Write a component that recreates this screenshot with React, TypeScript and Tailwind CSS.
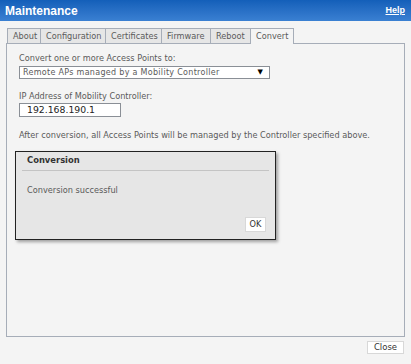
import React from 'react';

const tabs = [
  { name: 'About', w: 'w-[33px]' },
  { name: 'Configuration', w: 'w-[65px]' },
  { name: 'Certificates', w: 'w-[56px]' },
  { name: 'Firmware', w: 'w-[49px]' },
  { name: 'Reboot', w: 'w-[40px]' },
  { name: 'Convert', w: 'w-[44px]' },
];

export default function App() {
  const active = 'Convert';

  return (
    <div className="w-[411px] h-[364px] bg-[#f4f4f4] flex flex-col font-['DejaVu_Sans',Verdana,sans-serif] text-[#5a5a5a] overflow-hidden">
      {/* Header */}
      <div className="h-[21px] flex items-center justify-between pl-[5px] pr-[6px] bg-gradient-to-b from-[#135fb9] to-[#3a80d2]">
        <span className="text-white font-bold text-[12px] leading-none font-['Liberation_Sans',Arial,sans-serif]">Maintenance</span>
        <a href="#" className="text-white font-bold text-[9px] underline leading-none font-['Liberation_Sans',Arial,sans-serif]">Help</a>
      </div>

      {/* Tabs */}
      <div className="flex pl-[7px] mt-[7px] h-[16px] relative z-10">
        {tabs.map((t) => (
          <div
            key={t.name}
            className={`${t.w} h-[16px] pl-[5px] text-[8.2px] leading-[15px] border-t border-l border-[#a6adb8] ${
              t.name === active ? 'bg-[#f4f4f4] border-r' : 'bg-[#e6e6e6] border-b'
            }`}
          >
            {t.name}
          </div>
        ))}
      </div>

      {/* Panel */}
      <div className="mx-[6px] -mt-[1px] h-[294px] border border-[#a6adb8] bg-[#f4f4f4] px-[12px] pt-[8px] text-[8.2px]">
        <div className="leading-[12px]">Convert one or more Access Points to:</div>
        <div className="mt-[2px] w-[251px] h-[13px] border border-[#8a8f96] bg-white flex items-center justify-between pl-[3px] pr-[6px] text-[8px]">
          <span className="leading-none tracking-[0.3px]">Remote APs managed by a Mobility Controller</span>
          <span className="text-[7px] text-black leading-none">▼</span>
        </div>
        <div className="mt-[11px] leading-[12px]">IP Address of Mobility Controller:</div>
        <div className="mt-[1px] w-[102px] h-[14px] border border-[#8a8f96] bg-white flex items-center pl-[7px] text-[9.3px] text-[#222]">
          192.168.190.1
        </div>
        <div className="mt-[12px] leading-[12px]">After conversion, all Access Points will be managed by the Controller specified above.</div>

        {/* Dialog */}
        <div className="mt-[10px] -ml-[4px] w-[261px] h-[89px] border border-[#222] bg-[#e6e6e6] shadow-[2px_2px_3px_rgba(0,0,0,0.35)] flex flex-col px-[6px]">
          <div className="pl-[5px] pt-[2px] h-[19px] font-bold text-[#333] text-[8.4px] leading-[12px] border-b border-[#c4c4c4]">
            Conversion
          </div>
          <div className="pl-[5px] mt-[13px] leading-[12px]">Conversion successful</div>
          <div className="flex justify-end mt-auto mb-[7px] pr-[3px]">
            <button className="h-[15px] w-[21px] bg-white border border-[#d8d8d8] text-[8.2px] text-[#333] leading-none">OK</button>
          </div>
        </div>
      </div>

      {/* Footer */}
      <div className="flex justify-end pr-[7px] mt-[4px]">
        <button className="h-[13px] w-[37px] bg-white border border-[#d8d8d8] text-[8.5px] text-[#333] leading-none">Close</button>
      </div>
    </div>
  );
}
